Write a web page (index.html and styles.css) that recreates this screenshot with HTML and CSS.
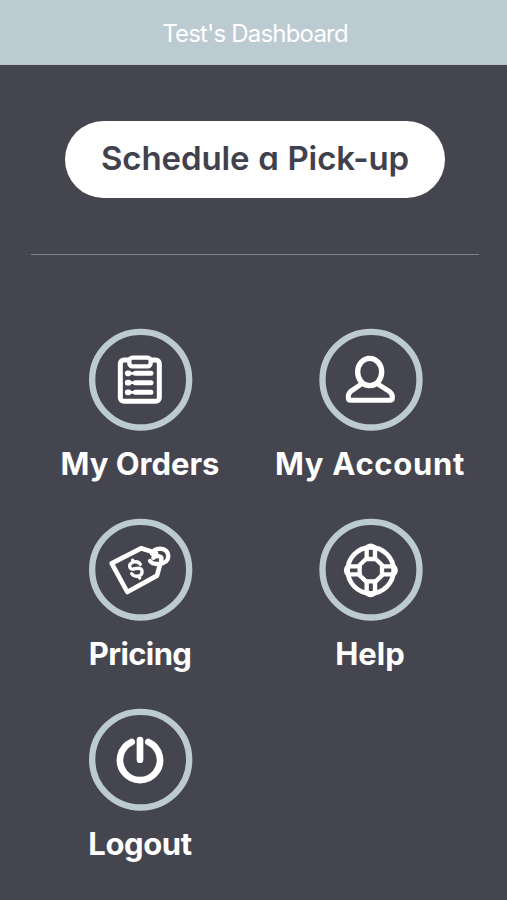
FILE: index.html
```html
<!DOCTYPE html>
<html lang="en">
<head>
<meta charset="utf-8">
<title>Test's Dashboard</title>
<link rel="stylesheet" href="styles.css">
</head>
<body>
<header class="topbar"><h1 class="title">Test's Dashboard</h1></header>
<main class="main">
  <button class="schedule"><span class="schedule-text">Schedule a Pick-up</span></button>
  <hr class="divider">
  <nav class="menu">
    <a class="item">
      <svg class="icon" viewBox="0 0 360 360">
        <ellipse class="ring" cx="182" cy="179" rx="145.500" ry="143.500"/>
        <rect x="121" y="120" width="117" height="124" rx="11" stroke-width="15"/>
        <rect x="148" y="113" width="64" height="26" rx="9" fill="#454550" stroke-width="13"/>
        <path stroke-width="17" d="M143 160h3M143 188h3M143 217h3"/>
        <path stroke-width="15" d="M166 160h47M166 188h47M166 217h47"/>
        <path stroke-width="8" d="M142 160h30M142 188h30M142 217h30"/>
      </svg>
      <span class="label orders">My Orders</span>
    </a>
    <a class="item">
      <svg class="icon" viewBox="0 0 360 360">
        <ellipse class="ring" cx="183" cy="179" rx="145.500" ry="143.500"/>
        <ellipse cx="179" cy="156" rx="36" ry="41" stroke-width="16"/>
        <path stroke-width="15" d="M150 195L121 215Q114 222 115 233Q115 241 123 241H239Q248 241 247 233Q248 222 239 215L208 195"/>
      </svg>
      <span class="label account">My Account</span>
    </a>
    <a class="item">
      <svg class="icon" viewBox="0 0 360 360">
        <ellipse class="ring" cx="182" cy="179" rx="145.500" ry="143.500"/>
        <path stroke-width="14" d="M228 129 L183 115 L95 160 L142 246 L231 197 L240 164"/>
        <path stroke-width="13" d="M210 153 Q218 163 234 162 Q264 160 265 139 Q264 117 240 116 Q222 116 216 131 M220 143 Q228 137 238 139 Q248 141 243 151"/>
        <path stroke-width="10" d="M181 163 Q174 153 162 156 Q147 160 149 170 Q151 181 166 176 Q183 172 186 182 Q188 194 176 198 Q162 201 155 191 M160 156 L158 151 M177 198 L179 204"/>
      </svg>
      <span class="label pricing">Pricing</span>
    </a>
    <a class="item">
      <svg class="icon" viewBox="0 0 360 360">
        <ellipse class="ring" cx="183" cy="179" rx="145.500" ry="143.500"/>
        <circle cx="182" cy="181" r="69" stroke-width="14"/>
        <path stroke-width="13" d="M168 147H197L216 165V196L197 214H168L149 196V165Z"/>
        <path stroke-width="13" d="M170 147V116Q171 108 182 107Q193 108 195 116V147M170 214V246Q171 254 182 255Q193 254 195 246V214M149 169H117Q109 170 108 181Q109 192 117 193H149M216 169H248Q256 170 257 181Q256 192 248 193H216"/>
      </svg>
      <span class="label help">Help</span>
    </a>
    <a class="item">
      <svg class="icon" viewBox="0 0 360 360">
        <ellipse class="ring" cx="182" cy="179" rx="145.500" ry="143.500"/>
        <path stroke-width="20" d="M155 126A60 60 0 1 0 205 126M180 120V179"/>
      </svg>
      <span class="label logout">Logout</span>
    </a>
  </nav>
</main>
</body>
</html>
```

FILE: styles.css
```css
* { box-sizing: border-box; }
html { background: #454550; }
body {
  margin: 0;
  height: 900px;
  overflow: hidden;
  background: #454550;
  color: #fff;
  font-family: Inter, "Open Sans", sans-serif;
}
.topbar {
  height: 65px;
  padding-top: 3px;
  display: flex;
  align-items: center;
  justify-content: center;
  background: #bccad2;
  border-bottom: 1px solid #b9bfca;
}
.title {
  margin: 0 0 0 3px;
  font-size: 24px;
  font-weight: 400;
  line-height: 30px;
  letter-spacing: -0.8px;
  white-space: nowrap;
}
.main { padding-top: 56px; }
.schedule {
  display: flex;
  align-items: center;
  justify-content: center;
  width: 380px;
  height: 77px;
  margin: 0 0 0 65px;
  padding: 0 0 3px;
  border: 0;
  border-radius: 39px;
  background: #fff;
  color: #41414d;
  font-family: inherit;
  font-size: 33px;
  font-weight: 600;
  font-feature-settings: "cv11";
}
.schedule-text { white-space: nowrap; letter-spacing: -0.1px; word-spacing: 0.5px; }
.divider {
  width: 448px;
  height: 1px;
  margin: 56px 0 0 31px;
  border: 0;
  background: #81818b;
}
.menu {
  display: grid;
  grid-template-columns: 230px 230px;
  grid-auto-rows: 190px;
  margin: 65px 0 0 25px;
}
.item {
  display: flex;
  flex-direction: column;
  align-items: center;
}
.icon {
  width: 120px;
  height: 120px;
  fill: none;
  stroke: #fff;
  stroke-linecap: round;
  stroke-linejoin: round;
}
.ring { stroke: #bccad2; stroke-width: 19; }
.label {
  margin-top: 4px;
  font-size: 31px;
  font-weight: 650;
  line-height: 40px;
  white-space: nowrap;
  font-feature-settings: "cv11";
}
.account { letter-spacing: 0.7px; }
.pricing { letter-spacing: -0.6px; }
.logout { letter-spacing: -0.4px; }
```
